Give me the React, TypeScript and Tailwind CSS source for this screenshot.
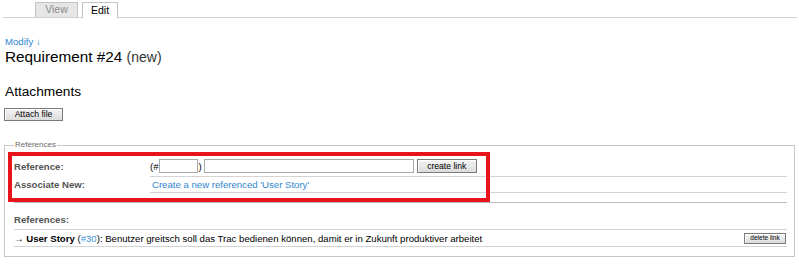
import React from 'react';

const LINK = 'text-[#2f86d0]';

function Button({ label, className }: { label: string; className: string }) {
  return (
    <button
      type="button"
      className={`flex items-center justify-center border border-[#7a7a7a] bg-gradient-to-b from-[#f4f4f4] to-[#dcdcdc] text-black leading-none shadow-[inset_1px_1px_0_#fff] ${className}`}
    >
      {label}
    </button>
  );
}

export default function App() {
  return (
    <div
      className="relative w-[799px] h-[265px] overflow-hidden bg-white text-black"
      style={{ fontFamily: '"Liberation Sans", Arial, sans-serif' }}
    >
      {/* Tabs */}
      <div className="ml-[3px] mr-[2px] h-[18px] border-b border-[#cfcfcf] flex items-end gap-[4px] pl-[32px]">
        <div className="w-[43px] h-[15px] bg-[#e6e6e6] border border-[#c4c4c4] border-b-0 flex items-center justify-center text-[10.5px] text-[#8a8a8a]">
          View
        </div>
        <div className="w-[36px] h-[16px] -mb-px bg-white border border-[#c4c4c4] border-b-0 flex items-center justify-center text-[10.5px] text-black">
          Edit
        </div>
      </div>

      <div className="pl-[5px]">
        <div className={`mt-[18px] text-[9.6px] leading-[11px] ${LINK}`}>Modify ↓</div>
        <h1 className="mt-[1px] text-[15.3px] leading-[18px] font-normal">
          Requirement #24 <span className="text-[14px] text-[#333]">(new)</span>
        </h1>
        <h2 className="mt-[18px] text-[13.7px] leading-[16px] font-normal">Attachments</h2>
        <div className="mt-[8px] pl-[-1px]">
          <Button label="Attach file" className="-ml-px w-[59px] h-[13px] text-[8.6px]" />
        </div>
      </div>

      {/* References fieldset */}
      <fieldset className="mx-[4px] mt-[19px] border border-[#c6c6c6] pl-[9px] pr-[7px] pb-[9px]">
        <legend className="px-[1px] text-[8px] leading-[10px] text-[#6a6a6a]">References</legend>

        <div className="mt-[7px] text-[9.6px] leading-[11px]">
          <div className="grid grid-cols-[136px_1fr]">
            <div className="h-[19px] flex items-center font-bold text-[#555]">Reference:</div>
            <div className="h-[20px] flex items-center border-b border-[#d3d3d3] pb-px">
              <span>(#</span>
              <input className="w-[39px] h-[14px] border border-[#a9a9a9] bg-white outline-none" />
              <span className="ml-px">)</span>
              <input className="ml-[2px] w-[210px] h-[14px] border border-[#a9a9a9] bg-white outline-none" />
              <Button label="create link" className="ml-[3px] w-[60px] h-[14px] text-[8.6px]" />
            </div>
            <div className="h-[15px] flex items-center font-bold text-[#555]">Associate New:</div>
            <div className="h-[16px] flex items-center border-b border-[#d3d3d3]">
              <a className={`${LINK} ml-[2px]`}>Create a new referenced 'User Story'</a>
            </div>
          </div>

          <div className="mt-[9px] border-t border-[#b9b9b9]" />

          <div className="mt-[11px] pb-[4px] border-b border-[#d3d3d3] font-bold text-[#555]">References:</div>
          <div className="h-[17px] flex items-center border-b border-[#d3d3d3]">
            <span className="flex-1">
              → <b>User Story</b> (<a className="text-[#3c94dc]">#30</a>): Benutzer greitsch soll das Trac bedienen
              können, damit er in Zukunft produktiver arbeitet
            </span>
            <Button label="delete link" className="mr-px w-[42px] h-[11px] text-[6.5px]" />
          </div>
        </div>
      </fieldset>

      {/* Highlight annotation */}
      <div className="absolute left-[8px] top-[152px] w-[482px] h-[50px] border-4 border-[#e8131b]" />
    </div>
  );
}
